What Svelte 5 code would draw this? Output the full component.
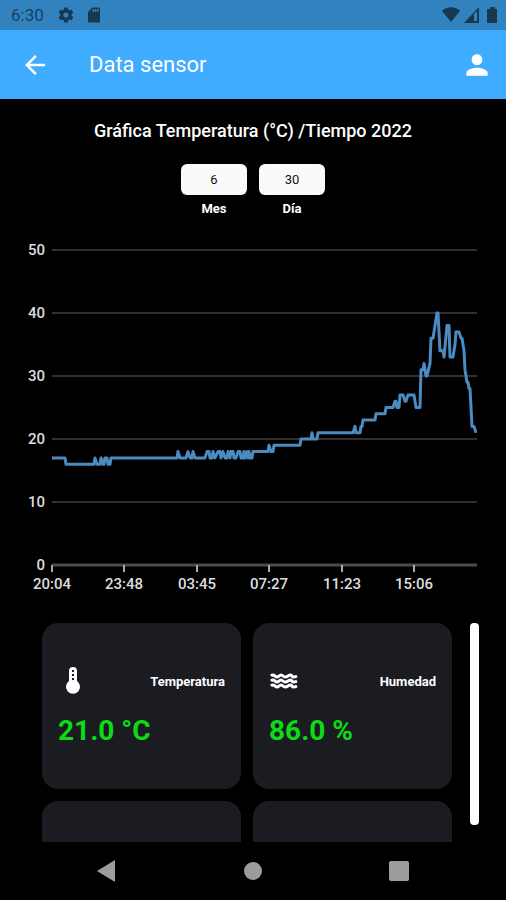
<script lang="ts">
    let month = $state('6');
    let day = $state('30');

    const left = 52;
    const right = 477;
    const bottom = 331;
    const step = 63;

    const yTicks = [0, 10, 20, 30, 40, 50];
    const xTicks = [
        { x: 52, label: '20:04' },
        { x: 124, label: '23:48' },
        { x: 197, label: '03:45' },
        { x: 269, label: '07:27' },
        { x: 342, label: '11:23' },
        { x: 414, label: '15:06' }
    ];

    // [x, degrees]
    const readings = [
        [52, 17], [65, 17], [66, 16], [94, 16], [95, 17], [97, 16], [100, 16], [101, 17],
        [103, 16], [104, 16], [105, 17], [107, 17], [108, 16], [110, 16], [111, 17],
        [177, 17], [178, 18], [180, 17], [186, 17], [188, 18], [190, 17], [192, 17],
        [193, 18], [195, 17], [205, 17], [207, 18], [209, 18], [210, 17], [212, 17],
        [213, 18], [215, 17], [218, 18], [220, 18], [221, 17], [223, 18], [225, 17],
        [227, 17], [228, 18], [230, 17], [231, 18], [233, 18], [234, 17], [236, 17],
        [238, 18], [240, 18], [241, 17], [243, 17], [244, 18], [245, 17], [247, 18],
        [248, 17], [249, 18], [250, 17], [252, 17], [253, 18], [268, 18], [269, 19],
        [271, 18], [273, 18], [274, 19], [300, 19], [301, 20], [311, 20], [312, 21],
        [313, 20], [317, 20], [318, 21], [353, 21], [355, 22], [356, 21], [360, 21],
        [361, 22], [362, 22], [363, 23], [375, 23], [376, 24], [385, 24], [386, 25],
        [393, 25], [395, 26], [396, 26], [397, 25], [399, 25], [400, 27], [403, 27],
        [405, 26], [406, 26], [408, 27], [414, 27], [416, 25], [420, 25], [421, 31],
        [423, 31], [424, 32], [426, 30], [427, 30], [430, 32], [431, 36], [433, 36],
        [436, 39], [437, 40], [438, 40], [440, 34], [443, 34], [444, 33], [447, 38],
        [449, 38], [450, 33], [453, 33], [455, 35], [456, 37], [459, 37], [461, 36],
        [462, 36], [464, 34], [465, 31], [466, 30], [467, 29], [468, 29], [469, 28],
        [470, 28], [472, 22], [474, 22], [476, 21]
    ];

    const yFor = (value: number) => bottom - (value / 10) * step;
    const line = readings.map(([x, value]) => `${x},${yFor(value)}`).join(' ');
</script>

<div class="screen">
    <div class="status-bar">
        <span>6:30</span>
        <svg width="18" height="18" viewBox="0 0 24 24" aria-hidden="true">
            <path d="M19.43 12.98c.04-.32.07-.64.07-.98s-.03-.66-.07-.98l2.11-1.65c.19-.15.24-.42.12-.64l-2-3.46c-.12-.22-.39-.3-.61-.22l-2.49 1c-.52-.4-1.08-.73-1.69-.98l-.38-2.65C14.46 2.18 14.25 2 14 2h-4c-.25 0-.46.18-.49.42l-.38 2.65c-.61.25-1.17.59-1.69.98l-2.49-1c-.23-.09-.49 0-.61.22l-2 3.46c-.13.22-.07.49.12.64l2.11 1.65c-.04.32-.07.65-.07.98s.03.66.07.98l-2.11 1.65c-.19.15-.24.42-.12.64l2 3.46c.12.22.39.3.61.22l2.49-1c.52.4 1.08.73 1.69.98l.38 2.65c.03.24.24.42.49.42h4c.25 0 .46-.18.49-.42l.38-2.65c.61-.25 1.17-.59 1.69-.98l2.49 1c.23.09.49 0 .61-.22l2-3.46c.12-.22.07-.49-.12-.64l-2.11-1.65zM12 15.5c-1.93 0-3.5-1.57-3.5-3.5s1.57-3.5 3.5-3.5 3.5 1.57 3.5 3.5-1.57 3.5-3.5 3.5z" />
        </svg>
        <svg width="18" height="18" viewBox="0 0 24 24" aria-hidden="true">
            <path d="M18 2h-8L4 8v12c0 1.100.9 2 2 2h12c1.100 0 2-.9 2-2V4c0-1.100-.9-2-2-2zm-6 6h-2V4h2v4zm3 0h-2V4h2v4zm3 0h-2V4h2v4z" />
        </svg>
        <div class="signals">
            <svg width="18" height="16" viewBox="0 0 18 16" aria-hidden="true">
                <path d="M0 4C5-1 13-1 18 4L9 15z" />
            </svg>
            <svg width="16" height="16" viewBox="0 0 16 16" aria-hidden="true">
                <path fill-rule="evenodd" d="M15 0v16H0zM10 7v7h3V4z" />
            </svg>
            <svg width="16" height="16" viewBox="0 0 16 16" aria-hidden="true">
                <path d="M6 0h5v2h2v14H3V2h3z" />
            </svg>
        </div>
    </div>

    <header class="app-bar">
        <button class="icon-btn" aria-label="Atrás">
            <svg width="30" height="30" viewBox="0 0 24 24">
                <path d="M20 11H7.830l5.590-5.590L12 4l-8 8 8 8 1.410-1.410L7.830 13H20v-2z" />
            </svg>
        </button>
        <h1>Data sensor</h1>
        <button class="icon-btn" aria-label="Perfil">
            <svg width="32" height="32" viewBox="0 0 24 24">
                <path d="M12 12c2.210 0 4-1.790 4-4s-1.790-4-4-4-4 1.790-4 4 1.790 4 4 4zm0 2c-2.670 0-8 1.340-8 4v2h16v-2c0-2.660-5.330-4-8-4z" />
            </svg>
        </button>
    </header>

    <main>
        <h2>Gráfica Temperatura (°C) /Tiempo 2022</h2>

        <div class="date-fields">
            <div class="field">
                <input id="month" inputmode="numeric" bind:value={month} />
                <label for="month">Mes</label>
            </div>
            <div class="field">
                <input id="day" inputmode="numeric" bind:value={day} />
                <label for="day">Día</label>
            </div>
        </div>

        <svg class="chart" viewBox="0 0 506 364" role="img" aria-label="Temperatura">
            {#each yTicks as tick}
                <line class={tick === 0 ? 'axis' : 'grid-line'} x1={left} x2={right} y1={yFor(tick)} y2={yFor(tick)} />
                <text x="45" y={yFor(tick) + 5} text-anchor="end">{tick}</text>
            {/each}
            {#each xTicks as tick}
                <line class="tick" x1={tick.x} x2={tick.x} y1={bottom} y2={bottom + 7} />
                <text x={tick.x} y="355" text-anchor="middle">{tick.label}</text>
            {/each}
            <polyline points={line} />
        </svg>

        <section class="sensors">
            <div class="cards">
                <article class="card">
                    <div class="card-head">
                        <svg width="30" height="30" viewBox="0 0 30 30" aria-hidden="true">
                            <path fill="#fff" d="M11 5a4 4 0 0 1 8 0v10a7 7 0 1 1-8 0z" />
                            <path fill="none" stroke="#1b1b22" stroke-width="2" stroke-dasharray="2 2" d="M15 4v10" />
                        </svg>
                        <h3>Temperatura</h3>
                    </div>
                    <p>21.0 °C</p>
                </article>
                <article class="card">
                    <div class="card-head">
                        <svg width="30" height="30" viewBox="0 0 30 30" aria-hidden="true">
                            <g fill="none" stroke="#fff" stroke-width="3">
                                <path d="M2 10q2 -2 4 0t4 0 4 0 5 0 4 0 5 0" />
                                <path d="M2 15q2 -2 4 0t4 0 4 0 5 0 4 0 5 0" />
                                <path d="M2 20q2 -2 4 0t4 0 4 0 5 0 4 0 5 0" />
                            </g>
                        </svg>
                        <h3>Humedad</h3>
                    </div>
                    <p>86.0 %</p>
                </article>
                <article class="card"></article>
                <article class="card"></article>
            </div>
            <div class="scroll-thumb"></div>
        </section>
    </main>

    <nav class="system-nav">
        <button aria-label="Volver">
            <svg width="20" height="22" viewBox="0 0 20 22"><path d="M0 11L18 0v22z" /></svg>
        </button>
        <button aria-label="Inicio">
            <svg width="20" height="20" viewBox="0 0 20 20"><circle cx="10" cy="10" r="9" /></svg>
        </button>
        <button aria-label="Recientes">
            <svg width="20" height="20" viewBox="0 0 20 20"><rect width="20" height="20" rx="2" /></svg>
        </button>
    </nav>
</div>

<style>
    :global(body) {
        margin: 0;
        background: #000;
    }

    .screen {
        display: flex;
        flex-direction: column;
        height: 100vh;
        background: #000;
        color: #fff;
        font-family: Roboto, "Liberation Sans", sans-serif;
    }

    h1, h2, h3, p {
        margin: 0;
    }

    button {
        display: flex;
        align-items: center;
        justify-content: center;
        padding: 0;
        border: none;
        background: none;
        cursor: pointer;
    }

    .status-bar {
        display: flex;
        align-items: center;
        gap: 10px;
        height: 30px;
        padding: 0 6px 0 11px;
        background: #3182bf;
        color: #19405f;
        font-size: 17px;
    }

    .status-bar span {
        margin-right: 3px;
    }

    .status-bar svg {
        fill: #163850;
    }

    .signals {
        display: flex;
        gap: 4px;
        margin-left: auto;
    }

    .app-bar {
        display: flex;
        align-items: center;
        height: 69px;
        padding: 0 13px 0 20px;
        background: #40acff;
    }

    .app-bar h1 {
        flex: 1;
        margin-left: 39px;
        font-size: 22px;
        font-weight: 400;
        line-height: 27px;
    }

    .icon-btn svg {
        fill: #fff;
    }

    main {
        display: flex;
        flex: 1;
        flex-direction: column;
        min-height: 0;
    }

    h2 {
        margin-top: 22px;
        font-size: 18px;
        font-weight: 500;
        line-height: 20px;
        text-align: center;
    }

    .date-fields {
        display: flex;
        justify-content: center;
        gap: 12px;
        margin: 23px 0 17px;
    }

    .field {
        display: flex;
        flex-direction: column;
        align-items: center;
        gap: 6px;
    }

    .field input {
        box-sizing: border-box;
        width: 66px;
        height: 31px;
        padding: 0;
        border: none;
        border-radius: 6px;
        background: #fafafa;
        color: #111;
        font-family: inherit;
        font-size: 13px;
        text-align: center;
    }

    .field label {
        font-size: 13px;
        font-weight: 700;
        line-height: 16px;
    }

    .chart {
        display: block;
        flex-shrink: 0;
        width: 100%;
    }

    .chart text {
        fill: #ddd;
        font-size: 15px;
        font-weight: 500;
    }

    .grid-line {
        stroke: #303034;
        stroke-width: 2;
    }

    .axis {
        stroke: #4c4c4c;
        stroke-width: 3;
    }

    .tick {
        stroke: #aaa;
        stroke-width: 2;
    }

    polyline {
        fill: none;
        stroke: #4a8cc2;
        stroke-width: 3;
        stroke-linejoin: round;
    }

    .sensors {
        display: flex;
        flex: 1;
        gap: 18px;
        min-height: 0;
        margin-top: 25px;
        padding: 0 27px 0 42px;
        overflow: hidden;
    }

    .cards {
        display: grid;
        flex: 1;
        grid-template-columns: 1fr 1fr;
        grid-auto-rows: 166px;
        gap: 12px;
    }

    .card {
        box-sizing: border-box;
        padding: 43px 16px 0;
        border-radius: 16px;
        background: #1b1b22;
    }

    .card-head {
        display: flex;
        align-items: center;
        justify-content: space-between;
    }

    .card h3 {
        font-size: 13px;
        font-weight: 700;
    }

    .card p {
        margin-top: 18px;
        color: #0bdc14;
        font-size: 28px;
        font-weight: 700;
        line-height: 34px;
    }

    .scroll-thumb {
        width: 9px;
        height: 202px;
        border-radius: 4px;
        background: #fff;
    }

    .system-nav {
        display: grid;
        grid-template-columns: repeat(3, 1fr);
        height: 58px;
        padding: 0 34px;
    }

    .system-nav svg {
        fill: #9c9c9c;
    }
</style>
